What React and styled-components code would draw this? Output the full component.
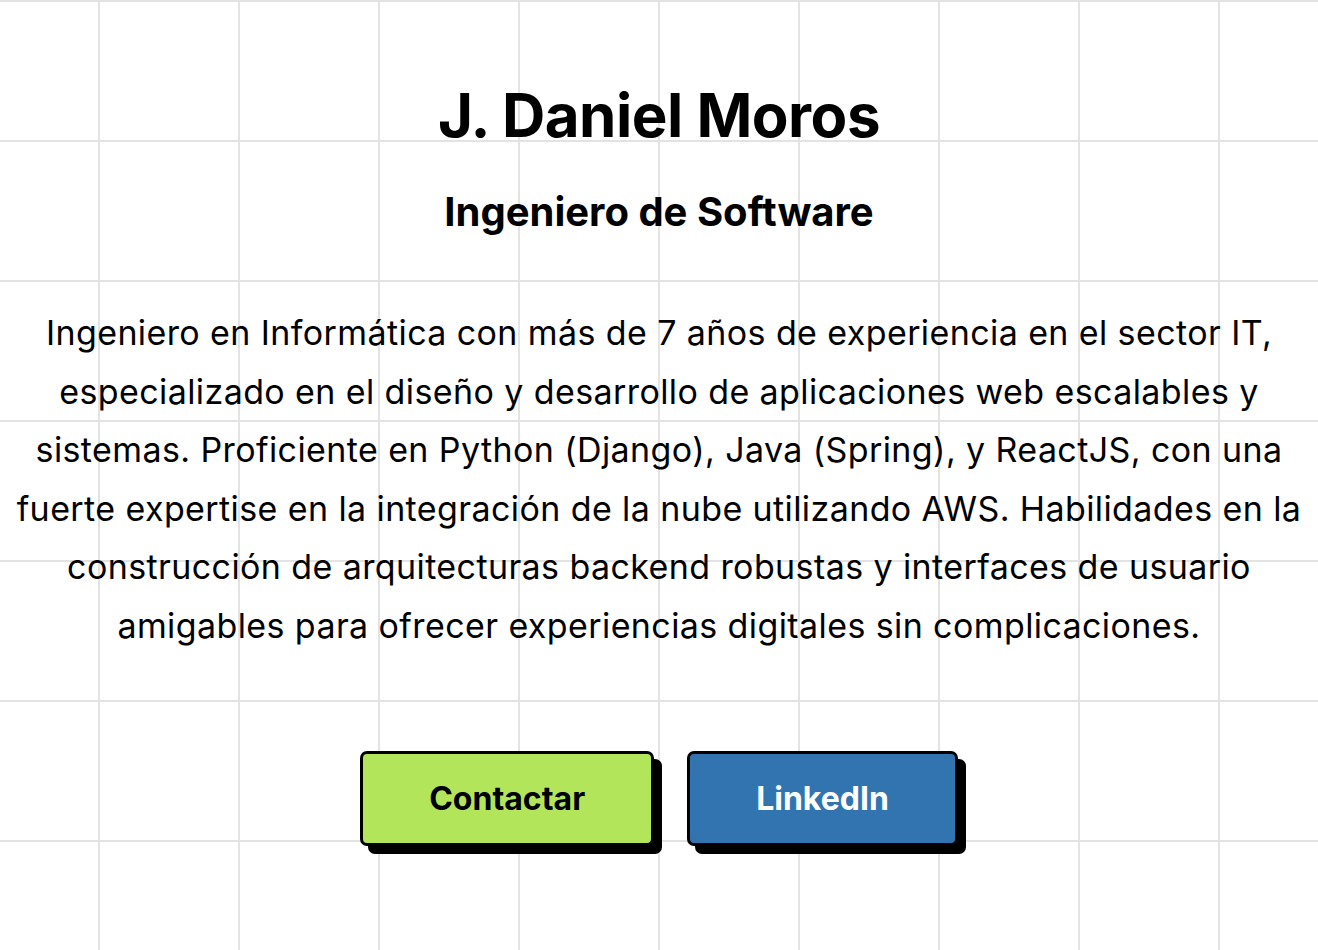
import React from 'react'
import styled, { createGlobalStyle } from 'styled-components'

const GlobalStyle = createGlobalStyle`
  html, body {
    margin: 0;
    padding: 0;
  }
  body {
    background-color: #ffffff;
    background-image:
      linear-gradient(to right, #e3e3e3 2px, transparent 2px),
      linear-gradient(to bottom, #e3e3e3 2px, transparent 2px);
    background-size: 140px 140px;
    background-position: 98px 0, 0 0;
    font-family: Inter, "Noto Sans", sans-serif;
    color: #000;
    min-height: 950px;
  }
`

const Hero = styled.section`
  display: flex;
  flex-direction: column;
  align-items: center;
  padding: 80px 0 0;
  text-align: center;
`

const Name = styled.h1`
  margin: 0;
  font-size: 60px;
  font-weight: 700;
  letter-spacing: -0.5px;
  line-height: 70px;
`

const Role = styled.h2`
  margin: 38px 0 0;
  font-size: 40px;
  font-weight: 700;
  line-height: 48px;
`

const Bio = styled.p`
  margin: 68px 0 0;
  font-size: 34px;
  font-weight: 400;
  letter-spacing: 0.4px;
  line-height: 58.5px;
  white-space: nowrap;
`

const Actions = styled.div`
  display: flex;
  gap: 33px;
  margin-top: 96px;
`

const Button = styled.a`
  display: flex;
  align-items: center;
  justify-content: center;
  height: 95px;
  box-sizing: border-box;
  padding: 0 66px;
  border: 3px solid #000;
  border-radius: 7px;
  box-shadow: 8px 8px 0 #000;
  background: ${p => p.$bg};
  color: ${p => p.$fg};
  font-size: 32px;
  font-weight: 700;
  text-decoration: none;
  cursor: pointer;
`

export default function App() {
  return (
    <>
      <GlobalStyle />
      <Hero>
        <Name>J. Daniel Moros</Name>
        <Role>Ingeniero de Software</Role>
        <Bio>
          Ingeniero en Informática con más de 7 años de experiencia en el sector IT,<br />
          especializado en el diseño y desarrollo de aplicaciones web escalables y<br />
          sistemas. Proficiente en Python (Django), Java (Spring), y ReactJS, con una<br />
          fuerte expertise en la integración de la nube utilizando AWS. Habilidades en la<br />
          construcción de arquitecturas backend robustas y interfaces de usuario<br />
          amigables para ofrecer experiencias digitales sin complicaciones.
        </Bio>
        <Actions>
          <Button $bg="#b3e55b" $fg="#000">Contactar</Button>
          <Button $bg="#3274b0" $fg="#fff">LinkedIn</Button>
        </Actions>
      </Hero>
    </>
  )
}
